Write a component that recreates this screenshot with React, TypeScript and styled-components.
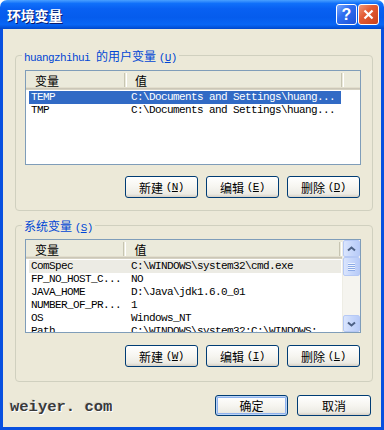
import React from "react";
import styled, { createGlobalStyle } from "styled-components";

const GlobalStyle = createGlobalStyle`
  html, body {
    margin: 0;
    padding: 0;
    background: #ffffff;
  }
  body {
    font-family: "Noto Sans CJK SC", "Noto Sans", sans-serif;
    font-size: 12px;
    color: #000;
  }
`;

const Window = styled.div`
  width: 384px;
  height: 430px;
  display: flex;
  flex-direction: column;
`;

const TitleBar = styled.div`
  height: 29px;
  flex-shrink: 0;
  display: flex;
  align-items: center;
  padding: 0 5px 0 7px;
  border-radius: 7px 7px 0 0;
  background: linear-gradient(
    to bottom,
    #4aa0ff 0%,
    #1070fa 12%,
    #0860f2 30%,
    #055ced 60%,
    #0866f5 85%,
    #0048cc 100%
  );
`;

const Title = styled.div`
  flex: 1;
  color: #fff;
  font-size: 14px;
  font-weight: 700;
  letter-spacing: -0.2px;
  text-shadow: 1px 1px 0 #0a1a6e;
`;

const CaptionButton = styled.div<{ $kind: "help" | "close" }>`
  width: 21px;
  height: 21px;
  box-sizing: border-box;
  margin-left: 1px;
  border: 1px solid #fff;
  border-radius: 3px;
  display: flex;
  align-items: center;
  justify-content: center;
  color: #fff;
  font-family: "Liberation Sans", sans-serif;
  font-weight: 700;
  font-size: 16px;
  background: ${(p) =>
    p.$kind === "close"
      ? "linear-gradient(135deg, #f09a7c 0%, #e35b34 40%, #c9421c 100%)"
      : "linear-gradient(135deg, #7aa8ff 0%, #2f6ef0 40%, #1c52d8 100%)"};
`;

const Frame = styled.div`
  flex: 1;
  display: flex;
  flex-direction: column;
  background: #ece9d8;
  border: 3px solid #0850e0;
  border-top: none;
  padding: 0 8px 0 7px;
`;

const GroupBox = styled.div<{ $top: number; $pt: number; $pb: number }>`
  position: relative;
  margin: ${(p) => p.$top}px 0 0 5px;
  padding: ${(p) => p.$pt}px 11px ${(p) => p.$pb}px 9px;
  border: 1px solid #d0d0bf;
  border-radius: 4px;
`;

const Legend = styled.div`
  position: absolute;
  top: -8px;
  left: 6px;
  padding: 0 2px;
  background: #ece9d8;
  color: #0046d5;
  line-height: 15px;
  white-space: nowrap;
`;

const Mono = styled.span`
  font-family: "Liberation Mono", monospace;
  font-size: 11px;
  letter-spacing: -0.6px;
`;

const Key = styled.span`
  text-decoration: underline;
`;

const List = styled.div<{ $h: number }>`
  height: ${(p) => p.$h}px;
  box-sizing: border-box;
  border: 1px solid #7f9db9;
  background: #fff;
  display: flex;
  overflow: hidden;
`;

const ListMain = styled.div`
  flex: 1;
  min-width: 0;
  display: flex;
  flex-direction: column;
`;

const Header = styled.div`
  height: 19px;
  flex-shrink: 0;
  display: flex;
  align-items: center;
  background: #ebeadb;
  box-shadow: inset 0 -1px #d6d2c2, inset 0 -2px #cbc7b8, inset 0 -3px #e2decd;
`;

const HeaderCell = styled.div<{ $w: number; $pl: number }>`
  width: ${(p) => p.$w}px;
  padding-left: ${(p) => p.$pl}px;
  box-sizing: border-box;
  line-height: 16px;
  font-size: 12px;
`;

const HeaderDivider = styled.div`
  width: 1px;
  height: 14px;
  margin-top: -2px;
  border-left: 1px solid #c7c5b2;
  border-right: 1px solid #fff;
`;

const Rows = styled.div`
  padding-top: 1px;
`;

const Row = styled.div<{ $sel?: "active" | "inactive" }>`
  display: flex;
  width: 312px;
  height: 13px;
  margin-left: 3px;
  line-height: 13px;
  white-space: nowrap;
  background: ${(p) =>
    p.$sel === "active" ? "#316ac5" : p.$sel === "inactive" ? "#ecebe4" : "transparent"};
  color: ${(p) => (p.$sel === "active" ? "#fff" : "#000")};
`;

const Cell = styled(Mono)<{ $w?: number; $pl: number }>`
  display: block;
  flex: ${(p) => (p.$w ? `0 0 ${p.$w}px` : "1")};
  padding-left: ${(p) => p.$pl}px;
  box-sizing: border-box;
  overflow: hidden;
`;

const ScrollBar = styled.div`
  width: 17px;
  flex-shrink: 0;
  display: flex;
  flex-direction: column;
  background: #f5f4ef;
  border-left: 1px solid #eeede5;
`;

const ScrollButton = styled.div<{ $h: number }>`
  height: ${(p) => p.$h}px;
  flex-shrink: 0;
  box-sizing: border-box;
  border: 1px solid #b6c9f5;
  border-radius: 2px;
  display: flex;
  align-items: center;
  justify-content: center;
  background: linear-gradient(to right, #dae5fd 0%, #c7d7fb 50%, #b8cbf8 100%);
`;

const Track = styled.div`
  flex: 1;
`;

const ButtonRow = styled.div<{ $mt: number }>`
  display: flex;
  justify-content: flex-end;
  gap: 8px;
  margin: ${(p) => p.$mt}px 1px 0 0;
`;

const XPButton = styled.div<{ $w?: number; $h?: number; $default?: boolean }>`
  width: ${(p) => p.$w ?? 73}px;
  height: ${(p) => p.$h ?? 22}px;
  box-sizing: border-box;
  border: 1px solid #003c74;
  border-radius: 3px;
  display: flex;
  align-items: center;
  justify-content: center;
  font-size: 12px;
  background: linear-gradient(to bottom, #ffffff 0%, #f6f5f0 50%, #ecebe4 85%, #d6d0c5 100%);
  box-shadow: ${(p) =>
    p.$default ? "inset 0 0 0 1px #bcd4f6, inset 0 0 0 2px #8fb2ed" : "none"};
`;

const Footer = styled.div`
  display: flex;
  align-items: flex-start;
  margin-top: 13px;
  padding-right: 2px;
`;

const Watermark = styled.div`
  flex: 1;
  margin-top: 2px;
  font-family: "Liberation Mono", monospace;
  font-weight: 700;
  font-size: 15.5px;
  line-height: 20px;
  color: #3a3a3a;
  text-shadow: 1px 1px 0 #fff, -1px -1px 0 #d8d6c8;
`;

const FooterButtons = styled.div`
  display: flex;
  gap: 9px;
`;

type Item = { name: string; value: string; sel?: "active" | "inactive" };

const userVars: Item[] = [
  { name: "TEMP", value: "C:\\Documents and Settings\\huang...", sel: "active" },
  { name: "TMP", value: "C:\\Documents and Settings\\huang..." },
];

const systemVars: Item[] = [
  { name: "ComSpec", value: "C:\\WINDOWS\\system32\\cmd.exe", sel: "inactive" },
  { name: "FP_NO_HOST_C...", value: "NO" },
  { name: "JAVA_HOME", value: "D:\\Java\\jdk1.6.0_01" },
  { name: "NUMBER_OF_PR...", value: "1" },
  { name: "OS", value: "Windows_NT" },
  { name: "Path", value: "C:\\WINDOWS\\system32;C:\\WINDOWS;..." },
];

const Chevron: React.FC<{ down?: boolean }> = ({ down }) => (
  <svg width="9" height="6" viewBox="0 0 9 6">
    <path
      d={down ? "M1 1.5 L4.5 4.5 L8 1.5" : "M1 4.5 L4.5 1.5 L8 4.5"}
      fill="none"
      stroke="#4d6185"
      strokeWidth="2"
    />
  </svg>
);

const Grip = () => (
  <svg width="7" height="8" viewBox="0 0 7 8">
    {[0, 2, 4, 6].map((y) => (
      <g key={y}>
        <rect x="0" y={y} width="7" height="1" fill="#eef4fe" />
        <rect x="0" y={y + 1} width="7" height="1" fill="#8caae6" />
      </g>
    ))}
  </svg>
);

const VarList: React.FC<{ items: Item[]; height: number; scroll?: boolean }> = ({
  items,
  height,
  scroll,
}) => (
  <List $h={height}>
    <ListMain>
      <Header>
        <HeaderCell $w={98} $pl={9}>变量</HeaderCell>
        <HeaderDivider />
        <HeaderCell $w={214} $pl={8}>值</HeaderCell>
        <HeaderDivider />
      </Header>
      <Rows>
        {items.map((it) => (
          <Row key={it.name} $sel={it.sel}>
            <Cell $w={95} $pl={2}>{it.name}</Cell>
            <Cell $pl={7}>{it.value}</Cell>
          </Row>
        ))}
      </Rows>
    </ListMain>
    {scroll && (
      <ScrollBar>
        <ScrollButton $h={17}>
          <Chevron />
        </ScrollButton>
        <ScrollButton $h={19}>
          <Grip />
        </ScrollButton>
        <Track />
        <ScrollButton $h={17}>
          <Chevron down />
        </ScrollButton>
      </ScrollBar>
    )}
  </List>
);

const ActionButton: React.FC<{ label: string; hot: string }> = ({ label, hot }) => (
  <XPButton>
    {label}&nbsp;
    <Mono>
      (<Key>{hot}</Key>)
    </Mono>
  </XPButton>
);

const App: React.FC = () => {
  return (
    <Window>
      <GlobalStyle />
      <TitleBar>
        <Title>环境变量</Title>
        <CaptionButton $kind="help">?</CaptionButton>
        <CaptionButton $kind="close">
          <svg width="11" height="11" viewBox="0 0 11 11">
            <path d="M1.5 1.5 L9.5 9.5 M9.5 1.5 L1.5 9.5" stroke="#fff" strokeWidth="2.2" />
          </svg>
        </CaptionButton>
      </TitleBar>
      <Frame>
        <GroupBox $top={26} $pt={14} $pb={12}>
          <Legend>
            <Mono>huangzhihui </Mono>的用户变量 <Mono>(<Key>U</Key>)</Mono>
          </Legend>
          <VarList items={userVars} height={95} />
          <ButtonRow $mt={11}>
            <ActionButton label="新建" hot="N" />
            <ActionButton label="编辑" hot="E" />
            <ActionButton label="删除" hot="D" />
          </ButtonRow>
        </GroupBox>
        <GroupBox $top={14} $pt={13} $pb={14}>
          <Legend>
            系统变量 <Mono>(<Key>S</Key>)</Mono>
          </Legend>
          <VarList items={systemVars} height={94} scroll />
          <ButtonRow $mt={12}>
            <ActionButton label="新建" hot="W" />
            <ActionButton label="编辑" hot="I" />
            <ActionButton label="删除" hot="L" />
          </ButtonRow>
        </GroupBox>
        <Footer>
          <Watermark>weiyer. com</Watermark>
          <FooterButtons>
            <XPButton $w={73} $h={21} $default>确定</XPButton>
            <XPButton $w={74} $h={21}>取消</XPButton>
          </FooterButtons>
        </Footer>
      </Frame>
    </Window>
  );
};

export default App;
